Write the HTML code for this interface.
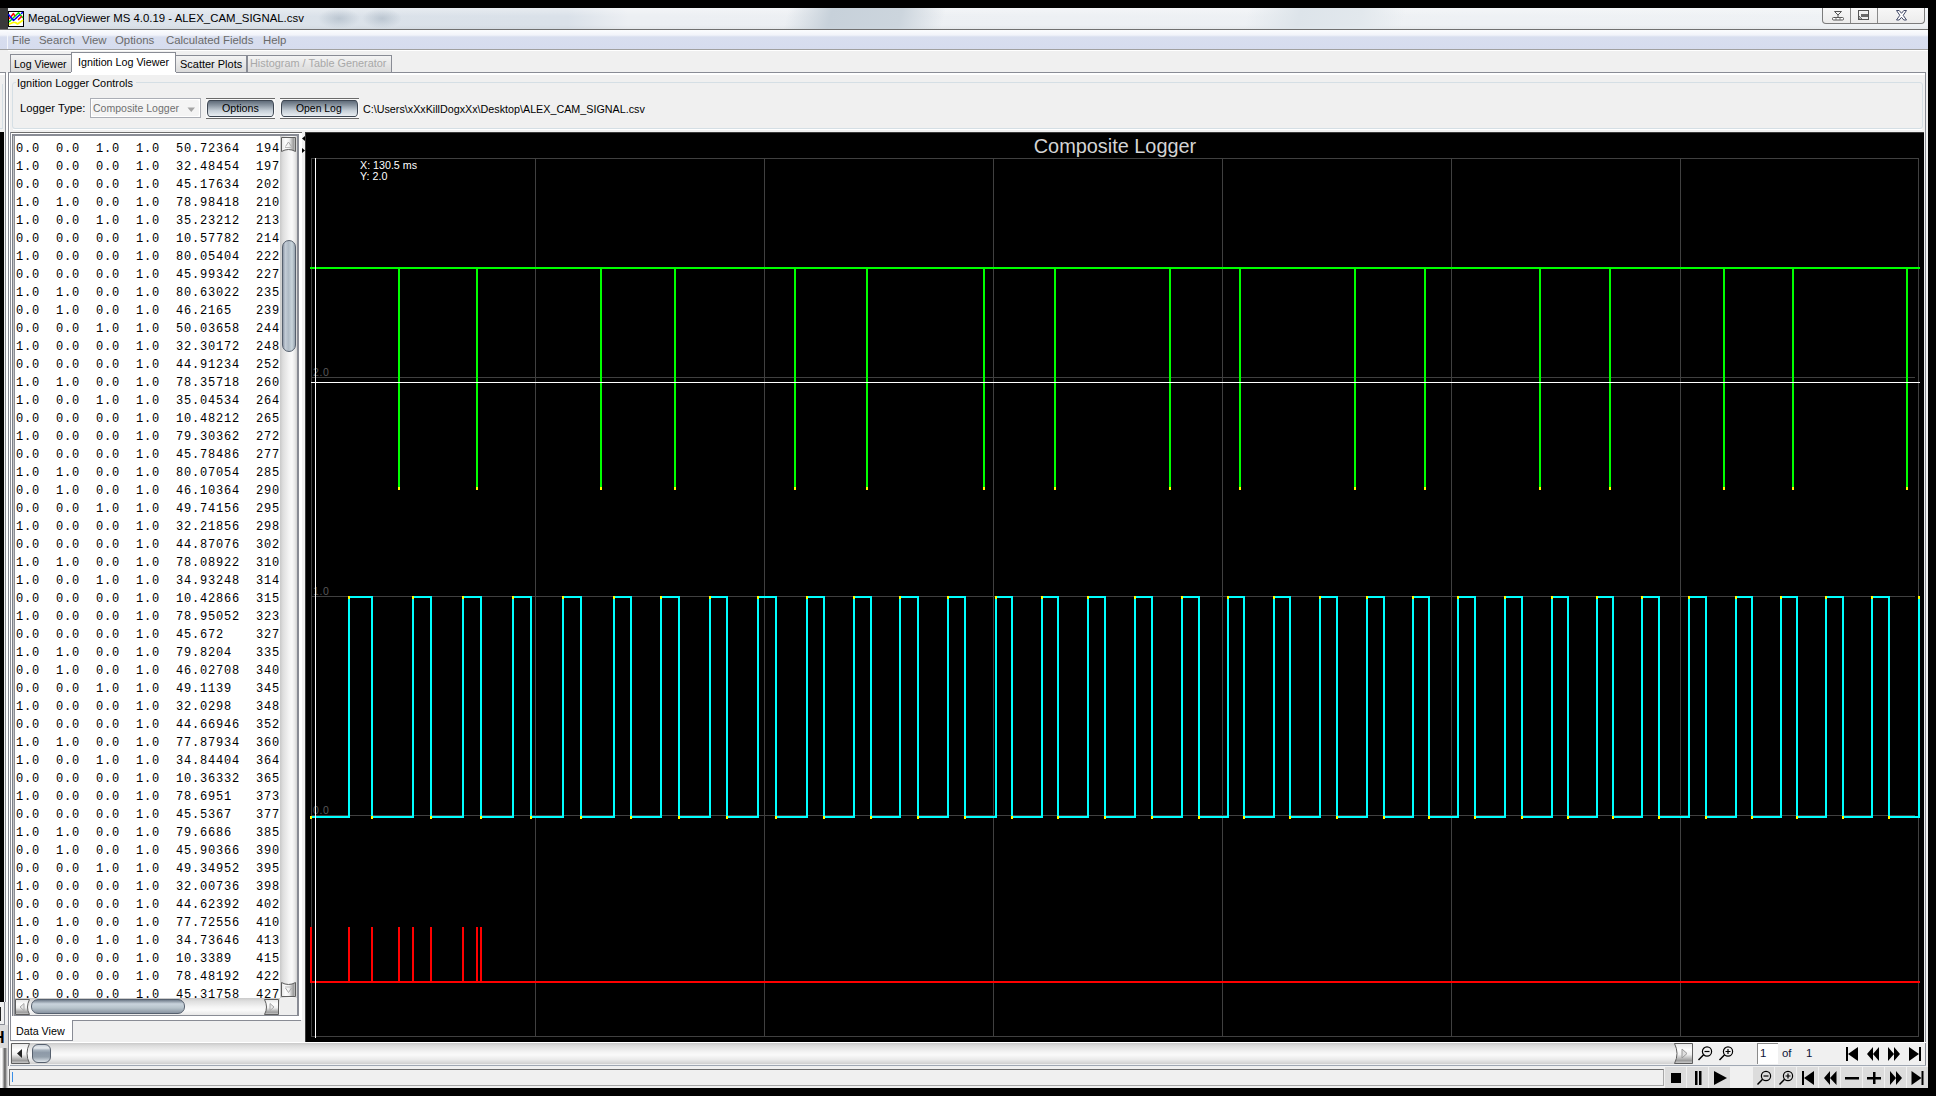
<!DOCTYPE html>
<html><head><meta charset="utf-8">
<style>
*{margin:0;padding:0;box-sizing:border-box}
html,body{width:1936px;height:1096px;overflow:hidden;background:#000}
body{position:relative;font-family:"Liberation Sans",sans-serif;font-size:11.4px;color:#000}
.a{position:absolute}
.t{position:absolute;white-space:pre;line-height:1}
svg text{font-family:"Liberation Sans",sans-serif}
.hsb{background:linear-gradient(#c9c9c9 0,#dedede 3px,#f4f4f4 9px,#fafafa 12px,#e8e8e8 17px,#d0d0d0 100%)}
.vsb{background:linear-gradient(90deg,#c9c9c9 0,#dedede 3px,#f4f4f4 9px,#fafafa 12px,#e8e8e8 15px,#d0d0d0 100%)}
.tbtn{position:absolute;top:1067px;height:21px;width:21px;background:#dcdcdc}
</style></head><body>

<!-- ===== left strip (window behind) ===== -->
<div class="a" style="left:0;top:8px;width:8px;height:22px;background:#3a3a3a"></div>
<div class="a" style="left:0;top:30px;width:8px;height:19px;background:linear-gradient(#fbfcfe 0,#f2f4fa 5px,#d8deef 7px,#d6dcee 100%)"></div><div class="a" style="left:7px;top:32px;width:1px;height:17px;background:#f4f6fb"></div>
<div class="a" style="left:0;top:49px;width:8px;height:1px;background:#a0a0a0"></div>
<div class="a" style="left:0;top:50px;width:8px;height:1038px;background:#f0f0f0"></div>
<div class="a" style="left:0;top:72px;width:6px;height:1px;background:#8b8e96"></div>
<div class="a" style="left:0;top:73px;width:5px;height:2px;background:#fff"></div>
<div class="a" style="left:5px;top:72px;width:1px;height:1016px;background:#8b8e96"></div>
<div class="a" style="left:6px;top:73px;width:2px;height:1015px;background:#fff"></div>
<div class="a" style="left:2px;top:84px;width:1px;height:44px;background:#d5dfe5"></div>
<div class="a" style="left:0;top:128px;width:3px;height:1px;background:#d5dfe5"></div>
<div class="a" style="left:0;top:132px;width:4px;height:870px;background:#000"></div>
<div class="a" style="left:5px;top:1002px;width:3px;height:86px;background:#f0f0f0"></div>
<div class="a" style="left:0;top:1007px;width:1px;height:14px;background:#222"></div>
<div class="a" style="left:4px;top:1002px;width:1px;height:23px;background:#8b8e96"></div>
<div class="a" style="left:0;top:1024px;width:5px;height:1px;background:#8b8e96"></div>
<div class="a" style="left:0;top:1025px;width:8px;height:23px;background:#dcdcdc"></div>
<div class="a" style="left:0;top:1031px;width:5px;height:15px;overflow:hidden"><div class="t" style="left:-7px;top:-1px;font-size:16px;font-weight:bold;color:#000">H</div></div>
<div class="a" style="left:0;top:1048px;width:8px;height:40px;background:linear-gradient(90deg,#f4f4f4 0,#fff 2px,#bdbdbd 3px,#555 5px,#9a9a9a 6px,#e8e8e8 8px)"></div>

<!-- ===== title bar ===== -->
<div class="a" style="left:8px;top:8px;width:1920px;height:21px;background:linear-gradient(90deg,#dce3ea 0,#dae1e9 560px,#eceff3 620px,#eff2f5 100%)"></div>
<div class="a" style="left:8px;top:8px;width:1920px;height:21px;background:linear-gradient(rgba(255,255,255,.35),rgba(255,255,255,0) 40%,rgba(255,255,255,0) 80%,rgba(0,0,0,.03))"></div>
<div class="a" style="left:318px;top:8px;width:42px;height:21px;background:radial-gradient(ellipse at center,rgba(150,165,180,.45),rgba(150,165,180,0) 70%)"></div>
<div class="a" style="left:362px;top:8px;width:40px;height:21px;background:radial-gradient(ellipse at center,rgba(150,165,180,.45),rgba(150,165,180,0) 70%)"></div>
<div class="a" style="left:780px;top:8px;width:170px;height:21px;background:linear-gradient(105deg,rgba(190,202,213,0) 5%,#c7d1da 30%,#ccd5dd 70%,rgba(190,202,213,0) 95%)"></div>
<div class="a" style="left:1240px;top:8px;width:170px;height:21px;background:linear-gradient(105deg,rgba(215,223,230,0) 5%,#dde4ea 35%,#e2e8ed 70%,rgba(215,223,230,0) 95%)"></div>
<div class="a" style="left:0;top:29px;width:1928px;height:1px;background:#707070"></div>
<!-- app icon -->
<svg class="a" style="left:8px;top:11px" width="16" height="16">
<rect x="0.5" y="0.5" width="15" height="15" fill="#fff" stroke="#000" stroke-width="1"/>
<g fill="none" stroke-width="1.5" stroke-linecap="round" stroke-linejoin="round">
<polyline points="1.5,10.5 10.5,1.8 14.5,6.5" stroke="#00e000"/>
<polyline points="1.5,7.5 5.5,2.5 6.5,4.5" stroke="#ff0000"/>
<polyline points="8.5,6.5 8.6,6.6" stroke="#ff0000"/>
<polyline points="10.5,8.5 13.5,5.5" stroke="#ff0000" stroke-dasharray="1.2 .6"/>
<polyline points="0.5,3.5 5.5,9.5 11.5,4" stroke="#0000ff"/>
<polyline points="13.5,2.5 14.5,1.5" stroke="#0000ff"/>
<polyline points="1.5,13 5,11.5 7.5,11.5 9.5,13 14.5,9.5" stroke="#ffff00" stroke-width="1.7"/>
</g>
</svg>
<div class="t" style="left:28px;top:13px;font-size:11.4px;color:#000">MegaLogViewer MS 4.0.19 - ALEX_CAM_SIGNAL.csv</div>
<!-- caption buttons -->
<div class="a" style="left:1822px;top:8px;width:103px;height:16px;border:1px solid #7c7c7c;border-top:none;border-radius:0 0 4px 4px;background:linear-gradient(#f7f7f7,#ececec)"></div>
<div class="a" style="left:1850px;top:8px;width:1px;height:15px;background:#8a8a8a"></div>
<div class="a" style="left:1877px;top:8px;width:1px;height:15px;background:#8a8a8a"></div>
<svg class="a" style="left:1830px;top:9px" width="16" height="13">
<path d="M4.5 2.5 H11.5 L8 6 Z M8 6 V8" fill="none" stroke="#555" stroke-width="1"/>
<rect x="2.5" y="8.5" width="11" height="2.5" rx="1" fill="#fff" stroke="#555" stroke-width="1"/>
<path d="M6 8.5 V11 M10 8.5 V11" stroke="#777" stroke-width="1"/>
</svg>
<svg class="a" style="left:1857px;top:10px" width="13" height="11" shape-rendering="crispEdges">
<rect x="1.5" y="0.5" width="10" height="9" fill="none" stroke="#555" stroke-width="1"/>
<rect x="4" y="4" width="7" height="3" fill="#6a6a6a"/>
<path d="M2 6 L5 9 H2 Z" fill="#fff" stroke="#555" stroke-width=".8" shape-rendering="auto"/>
</svg>
<svg class="a" style="left:1894px;top:9px" width="15" height="13">
<path d="M2.5 1.5 L5.2 1.5 L7.5 4.3 L9.8 1.5 L12.5 1.5 L9.2 6.3 L12.5 11 L9.8 11 L7.5 8.3 L5.2 11 L2.5 11 L5.8 6.3 Z" fill="#fff" stroke="#434a68" stroke-width="1"/>
</svg>

<!-- ===== menu bar ===== -->
<div class="a" style="left:8px;top:30px;width:1920px;height:19px;background:linear-gradient(#fbfcfe 0,#f2f4fa 5px,#d8deef 7px,#d6dcee 100%)"></div>
<div class="a" style="left:8px;top:49px;width:1920px;height:1px;background:#a0a0a0"></div>
<div class="t" style="left:12px;top:35px;color:#6a6a6a">File</div>
<div class="t" style="left:39px;top:35px;color:#6a6a6a">Search</div>
<div class="t" style="left:82px;top:35px;color:#6a6a6a">View</div>
<div class="t" style="left:115px;top:35px;color:#6a6a6a">Options</div>
<div class="t" style="left:166px;top:35px;color:#6a6a6a">Calculated Fields</div>
<div class="t" style="left:263px;top:35px;color:#6a6a6a">Help</div>

<!-- ===== main bg ===== -->
<div class="a" style="left:8px;top:50px;width:1920px;height:1038px;background:#f0f0f0"></div>
<div class="a" style="left:8px;top:50px;width:1920px;height:1px;background:#fff"></div>

<!-- tabs -->
<div class="a" style="left:10px;top:54px;width:62px;height:19px;border:1px solid #898c95;border-bottom:none;background:linear-gradient(#f4f4f4,#e6e6e6 50%,#d9d9d9)"></div>
<div class="t" style="left:14px;top:59px;transform:scaleX(.927);transform-origin:0 0">Log Viewer</div>
<div class="a" style="left:175px;top:55px;width:72px;height:18px;border:1px solid #898c95;border-bottom:none;background:linear-gradient(#f4f4f4,#e6e6e6 50%,#d9d9d9)"></div>
<div class="t" style="left:179.6px;top:59px;transform:scaleX(.963);transform-origin:0 0">Scatter Plots</div>
<div class="a" style="left:247px;top:55px;width:145px;height:18px;border:1px solid #898c95;border-bottom:none;background:linear-gradient(#f4f4f4,#e6e6e6 50%,#d9d9d9)"></div>
<div class="t" style="left:250.3px;top:58px;color:#a8a8a8;transform:scaleX(.955);transform-origin:0 0">Histogram / Table Generator</div>

<!-- panel border -->
<div class="a" style="left:8px;top:72px;width:1918px;height:1016px;border:1px solid #898c95;border-bottom:none;background:#f0f0f0"></div>
<div class="a" style="left:9px;top:73px;width:1916px;height:2px;background:#fff"></div>
<div class="a" style="left:9px;top:73px;width:1px;height:1015px;background:#fff"></div>
<!-- selected tab -->
<div class="a" style="left:71px;top:52px;width:105px;height:21px;border:1px solid #898c95;border-bottom:none;background:#fff"></div><div class="a" style="left:71px;top:72px;width:105px;height:3px;background:#fff"></div>
<div class="t" style="left:77.5px;top:57px;transform:scaleX(.941);transform-origin:0 0">Ignition Log Viewer</div>

<!-- group box -->
<div class="a" style="left:12px;top:82px;width:1911px;height:47px;border:1px solid #d5dfe5;border-radius:3px"></div>
<div class="a" style="left:16px;top:76px;width:120px;height:12px;background:#f0f0f0"></div>
<div class="t" style="left:17px;top:78px;transform:scaleX(.958);transform-origin:0 0">Ignition Logger Controls</div>
<div class="a" style="left:13px;top:129px;width:1909px;height:1px;background:#fff"></div>

<div class="t" style="left:19.6px;top:103px;transform:scaleX(.987);transform-origin:0 0">Logger Type:</div>
<div class="a" style="left:90px;top:98px;width:111px;height:20px;border:1px solid #abaeb5;background:#fff"></div><div class="a" style="left:92px;top:100px;width:107px;height:16px;border-radius:2px;background:#f4f4f4"></div>
<div class="t" style="left:92.8px;top:103px;color:#707070;transform:scaleX(.924);transform-origin:0 0">Composite Logger</div>
<svg class="a" style="left:187px;top:107px" width="9" height="6"><path d="M0.5 0.5 H8 L4.25 5 Z" fill="#a4a4a4"/></svg>

<!-- Options button -->
<div class="a" style="left:206px;top:98px;width:69px;height:21px;border-top:1px solid #6a6a6a;border-bottom:1px solid #6a6a6a;background:#fafafa"></div>
<div class="a" style="left:207px;top:100px;width:67px;height:17px;border:1px solid #3d4652;border-radius:3px/5px;background:linear-gradient(#5f6b79 0,#8c97a3 30%,#c7d0d8 65%,#e9eef2 100%)"></div>
<div class="t" style="left:221.5px;top:103px;transform:scaleX(.936);transform-origin:0 0">Options</div>
<!-- Open Log button -->
<div class="a" style="left:280px;top:98px;width:79px;height:21px;border-top:1px solid #6a6a6a;border-bottom:1px solid #6a6a6a;background:#fafafa"></div>
<div class="a" style="left:281px;top:100px;width:77px;height:17px;border:1px solid #3d4652;border-radius:3px/5px;background:linear-gradient(#5f6b79 0,#8c97a3 30%,#c7d0d8 65%,#e9eef2 100%)"></div>
<div class="t" style="left:295.6px;top:103px;transform:scaleX(.913);transform-origin:0 0">Open Log</div>
<div class="t" style="left:362.8px;top:104px;transform:scaleX(.943);transform-origin:0 0">C:\Users\xXxKillDogxXx\Desktop\ALEX_CAM_SIGNAL.csv</div>

<!-- ===== left table panel ===== -->
<div class="a" style="left:10px;top:132px;width:292px;height:1px;background:#6e6e6e"></div>
<div class="a" style="left:10px;top:133px;width:292px;height:887px;background:#fff"></div>
<div class="a" style="left:10px;top:132px;width:1px;height:909px;background:#898c95"></div>
<div class="a" style="left:12px;top:134px;width:287px;height:882px;border:2px solid #898c95;border-left:none"></div><div class="a" style="left:12px;top:134px;width:1px;height:882px;background:#7c7f88"></div><div class="a" style="left:13px;top:136px;width:1px;height:880px;background:#c4c4c4"></div><div class="a" style="left:14px;top:136px;width:1px;height:880px;background:#8a8d94"></div>
<div class="a" style="left:15px;top:136px;width:266px;height:862px;background:#fff;overflow:hidden">
<pre class="a" style="left:1px;top:4px;font-family:'Liberation Mono',monospace;font-size:12px;letter-spacing:.8px;line-height:18px;color:#000">0.0  0.0  1.0  1.0  50.72364  194
1.0  0.0  0.0  1.0  32.48454  197
0.0  0.0  0.0  1.0  45.17634  202
1.0  1.0  0.0  1.0  78.98418  210
1.0  0.0  1.0  1.0  35.23212  213
0.0  0.0  0.0  1.0  10.57782  214
1.0  0.0  0.0  1.0  80.05404  222
0.0  0.0  0.0  1.0  45.99342  227
1.0  1.0  0.0  1.0  80.63022  235
0.0  1.0  0.0  1.0  46.2165   239
0.0  0.0  1.0  1.0  50.03658  244
1.0  0.0  0.0  1.0  32.30172  248
0.0  0.0  0.0  1.0  44.91234  252
1.0  1.0  0.0  1.0  78.35718  260
1.0  0.0  1.0  1.0  35.04534  264
0.0  0.0  0.0  1.0  10.48212  265
1.0  0.0  0.0  1.0  79.30362  272
0.0  0.0  0.0  1.0  45.78486  277
1.0  1.0  0.0  1.0  80.07054  285
0.0  1.0  0.0  1.0  46.10364  290
0.0  0.0  1.0  1.0  49.74156  295
1.0  0.0  0.0  1.0  32.21856  298
0.0  0.0  0.0  1.0  44.87076  302
1.0  1.0  0.0  1.0  78.08922  310
1.0  0.0  1.0  1.0  34.93248  314
0.0  0.0  0.0  1.0  10.42866  315
1.0  0.0  0.0  1.0  78.95052  323
0.0  0.0  0.0  1.0  45.672    327
1.0  1.0  0.0  1.0  79.8204   335
0.0  1.0  0.0  1.0  46.02708  340
0.0  0.0  1.0  1.0  49.1139   345
1.0  0.0  0.0  1.0  32.0298   348
0.0  0.0  0.0  1.0  44.66946  352
1.0  1.0  0.0  1.0  77.87934  360
1.0  0.0  1.0  1.0  34.84404  364
0.0  0.0  0.0  1.0  10.36332  365
1.0  0.0  0.0  1.0  78.6951   373
0.0  0.0  0.0  1.0  45.5367   377
1.0  1.0  0.0  1.0  79.6686   385
0.0  1.0  0.0  1.0  45.90366  390
0.0  0.0  1.0  1.0  49.34952  395
1.0  0.0  0.0  1.0  32.00736  398
0.0  0.0  0.0  1.0  44.62392  402
1.0  1.0  0.0  1.0  77.72556  410
1.0  0.0  1.0  1.0  34.73646  413
0.0  0.0  0.0  1.0  10.3389   415
1.0  0.0  0.0  1.0  78.48192  422
0.0  0.0  0.0  1.0  45.31758  427</pre>
</div>
<!-- vertical scrollbar -->
<div class="a vsb" style="left:280px;top:136px;width:17px;height:862px"></div>
<svg class="a" style="left:281px;top:137px" width="15" height="15"><defs><linearGradient id="gU281137" x1="0" y1="0" x2="1" y2="0"><stop offset="0" stop-color="#e6e6e6"/><stop offset=".3" stop-color="#fdfdfd"/><stop offset=".55" stop-color="#f0f0f0"/><stop offset=".85" stop-color="#9c9c9c"/><stop offset="1" stop-color="#cfcfcf"/></linearGradient></defs><path d="M0.5,0.5 H14.5 V14.5 Q7.5,10.5 0.5,14.5 Z" fill="url(#gU281137)" stroke="#5e5e5e" stroke-width="1"/><path d="M4.5 9.5 L7.5 5 L10.5 9.5" fill="none" stroke="#aaa" stroke-width="1"/><path d="M4 10.5 H11" stroke="#bbb"/></svg>

<div class="a" style="left:282px;top:240px;width:14px;height:112px;border:1px solid #56606e;border-radius:7px;background:linear-gradient(90deg,#8d97a6 0,#c3ccd6 20%,#aeb9c4 45%,#c9d5dc 75%,#97a3ae)"></div>
<svg class="a" style="left:281px;top:982px" width="15" height="15"><defs><linearGradient id="gD281982" x1="0" y1="0" x2="1" y2="0"><stop offset="0" stop-color="#e6e6e6"/><stop offset=".3" stop-color="#fdfdfd"/><stop offset=".55" stop-color="#f0f0f0"/><stop offset=".85" stop-color="#9c9c9c"/><stop offset="1" stop-color="#cfcfcf"/></linearGradient></defs><path d="M0.5,0.5 Q7.5,4.5 14.5,0.5 V14.5 H0.5 Z" fill="url(#gD281982)" stroke="#5e5e5e" stroke-width="1"/><path d="M4.5 6 L7.5 10.5 L10.5 6" fill="none" stroke="#aaa" stroke-width="1"/><path d="M4 5 H11" stroke="#bbb"/></svg>
<!-- horizontal scrollbar -->
<div class="a hsb" style="left:15px;top:998px;width:265px;height:17px"></div>
<svg class="a" style="left:15px;top:999px" width="15" height="16"><defs><linearGradient id="gL15999" x1="0" y1="0" x2="0" y2="1"><stop offset="0" stop-color="#e6e6e6"/><stop offset=".3" stop-color="#fdfdfd"/><stop offset=".55" stop-color="#f0f0f0"/><stop offset=".85" stop-color="#9c9c9c"/><stop offset="1" stop-color="#cfcfcf"/></linearGradient></defs><path d="M0.5,0.5 H14.5 Q10.5,8.0 14.5,15.5 H0.5 Z" fill="url(#gL15999)" stroke="#5e5e5e" stroke-width="1"/><path d="M9 4.5 L5 8 L9 11.5 Z" fill="#e8e8e8" stroke="#a8a8a8" stroke-width="1"/></svg>

<div class="a" style="left:31px;top:999px;width:154px;height:15px;border:1px solid #56606e;border-radius:7px;background:linear-gradient(#6f7b8a,#c9d3dc 30%,#b8c4cc 60%,#8893a0)"></div>
<svg class="a" style="left:264px;top:999px" width="15" height="16"><defs><linearGradient id="gR264999" x1="0" y1="0" x2="0" y2="1"><stop offset="0" stop-color="#e6e6e6"/><stop offset=".3" stop-color="#fdfdfd"/><stop offset=".55" stop-color="#f0f0f0"/><stop offset=".85" stop-color="#9c9c9c"/><stop offset="1" stop-color="#cfcfcf"/></linearGradient></defs><path d="M0.5,0.5 H14.5 V15.5 H0.5 Q4.5,8.0 0.5,0.5 Z" fill="url(#gR264999)" stroke="#5e5e5e" stroke-width="1"/><path d="M6 4.5 L10 8 L6 11.5 Z" fill="#e8e8e8" stroke="#a8a8a8" stroke-width="1"/></svg>

<div class="a" style="left:280px;top:998px;width:17px;height:17px;background:#eeeeee"></div>
<!-- Data View tab area -->
<div class="a" style="left:11px;top:1020px;width:290px;height:21px;background:#f0f0f0"></div>
<div class="a" style="left:72px;top:1020px;width:229px;height:1px;background:#898c95"></div>
<div class="a" style="left:11px;top:1016px;width:290px;height:4px;background:#fff"></div><div class="a" style="left:11px;top:1016px;width:62px;height:25px;background:#fff;border-bottom:1px solid #898c95"></div><div class="a" style="left:72px;top:1020px;width:1px;height:21px;background:#898c95"></div>
<div class="t" style="left:16px;top:1026px;transform:scaleX(.941);transform-origin:0 0">Data View</div>

<!-- splitter -->
<div class="a" style="left:302px;top:132px;width:3px;height:910px;background:#f0f0f0"></div><div class="a" style="left:299px;top:133px;width:3px;height:887px;background:#fff"></div>
<svg class="a" style="left:301px;top:135px" width="5" height="20"><path d="M4 1 L1 3.5 L4 6 Z" fill="#000"/><path d="M1 13 L4 15.5 L1 18 Z" fill="#000"/></svg>

<div class="a" style="left:305px;top:132px;width:1619px;height:910px;background:#000;border-left:1px solid #3a3a3a;border-top:1px solid #3a3a3a"></div>

<svg width="1936" height="1096" style="position:absolute;left:0;top:0" shape-rendering="crispEdges"><rect x="311" y="158" width="1608" height="1" fill="#404040"/><rect x="311" y="1036" width="1608" height="1" fill="#404040"/><rect x="311" y="158" width="1" height="879" fill="#404040"/><rect x="1918" y="158" width="1" height="879" fill="#404040"/><rect x="535" y="158" width="1" height="879" fill="#404040"/><rect x="764" y="158" width="1" height="879" fill="#404040"/><rect x="993" y="158" width="1" height="879" fill="#404040"/><rect x="1222" y="158" width="1" height="879" fill="#404040"/><rect x="1451" y="158" width="1" height="879" fill="#404040"/><rect x="1680" y="158" width="1" height="879" fill="#404040"/><rect x="311" y="377" width="1604" height="1" fill="#404040"/><rect x="311" y="596" width="1604" height="1" fill="#404040"/><rect x="311" y="815" width="1604" height="1" fill="#404040"/><text x="313" y="376" fill="#585858" font-size="10.5" letter-spacing="0.6">2.0</text><text x="313" y="595" fill="#585858" font-size="10.5" letter-spacing="0.6">1.0</text><text x="313" y="814" fill="#585858" font-size="10.5" letter-spacing="0.6">0.0</text><rect x="310" y="267" width="1610" height="2" fill="#00ff00"/><rect x="398" y="267" width="2" height="223" fill="#00ff00"/><rect x="398" y="487" width="2" height="3" fill="#ffff00"/><rect x="476" y="267" width="2" height="223" fill="#00ff00"/><rect x="476" y="487" width="2" height="3" fill="#ffff00"/><rect x="600" y="267" width="2" height="223" fill="#00ff00"/><rect x="600" y="487" width="2" height="3" fill="#ffff00"/><rect x="674" y="267" width="2" height="223" fill="#00ff00"/><rect x="674" y="487" width="2" height="3" fill="#ffff00"/><rect x="794" y="267" width="2" height="223" fill="#00ff00"/><rect x="794" y="487" width="2" height="3" fill="#ffff00"/><rect x="866" y="267" width="2" height="223" fill="#00ff00"/><rect x="866" y="487" width="2" height="3" fill="#ffff00"/><rect x="983" y="267" width="2" height="223" fill="#00ff00"/><rect x="983" y="487" width="2" height="3" fill="#ffff00"/><rect x="1054" y="267" width="2" height="223" fill="#00ff00"/><rect x="1054" y="487" width="2" height="3" fill="#ffff00"/><rect x="1169" y="267" width="2" height="223" fill="#00ff00"/><rect x="1169" y="487" width="2" height="3" fill="#ffff00"/><rect x="1239" y="267" width="2" height="223" fill="#00ff00"/><rect x="1239" y="487" width="2" height="3" fill="#ffff00"/><rect x="1354" y="267" width="2" height="223" fill="#00ff00"/><rect x="1354" y="487" width="2" height="3" fill="#ffff00"/><rect x="1424" y="267" width="2" height="223" fill="#00ff00"/><rect x="1424" y="487" width="2" height="3" fill="#ffff00"/><rect x="1539" y="267" width="2" height="223" fill="#00ff00"/><rect x="1539" y="487" width="2" height="3" fill="#ffff00"/><rect x="1609" y="267" width="2" height="223" fill="#00ff00"/><rect x="1609" y="487" width="2" height="3" fill="#ffff00"/><rect x="1723" y="267" width="2" height="223" fill="#00ff00"/><rect x="1723" y="487" width="2" height="3" fill="#ffff00"/><rect x="1792" y="267" width="2" height="223" fill="#00ff00"/><rect x="1792" y="487" width="2" height="3" fill="#ffff00"/><rect x="1906" y="267" width="2" height="223" fill="#00ff00"/><rect x="1906" y="487" width="2" height="3" fill="#ffff00"/><rect x="310" y="816" width="40" height="2" fill="#00ffff"/><rect x="348" y="596" width="2" height="222" fill="#00ffff"/><rect x="348" y="596" width="25" height="2" fill="#00ffff"/><rect x="371" y="596" width="2" height="222" fill="#00ffff"/><rect x="371" y="816" width="43" height="2" fill="#00ffff"/><rect x="412" y="596" width="2" height="222" fill="#00ffff"/><rect x="412" y="596" width="20" height="2" fill="#00ffff"/><rect x="430" y="596" width="2" height="222" fill="#00ffff"/><rect x="430" y="816" width="34" height="2" fill="#00ffff"/><rect x="462" y="596" width="2" height="222" fill="#00ffff"/><rect x="462" y="596" width="20" height="2" fill="#00ffff"/><rect x="480" y="596" width="2" height="222" fill="#00ffff"/><rect x="480" y="816" width="34" height="2" fill="#00ffff"/><rect x="512" y="596" width="2" height="222" fill="#00ffff"/><rect x="512" y="596" width="20" height="2" fill="#00ffff"/><rect x="530" y="596" width="2" height="222" fill="#00ffff"/><rect x="530" y="816" width="34" height="2" fill="#00ffff"/><rect x="562" y="596" width="2" height="222" fill="#00ffff"/><rect x="562" y="596" width="20" height="2" fill="#00ffff"/><rect x="580" y="596" width="2" height="222" fill="#00ffff"/><rect x="580" y="816" width="35" height="2" fill="#00ffff"/><rect x="613" y="596" width="2" height="222" fill="#00ffff"/><rect x="613" y="596" width="19" height="2" fill="#00ffff"/><rect x="630" y="596" width="2" height="222" fill="#00ffff"/><rect x="630" y="816" width="32" height="2" fill="#00ffff"/><rect x="660" y="596" width="2" height="222" fill="#00ffff"/><rect x="660" y="596" width="20" height="2" fill="#00ffff"/><rect x="678" y="596" width="2" height="222" fill="#00ffff"/><rect x="678" y="816" width="33" height="2" fill="#00ffff"/><rect x="709" y="596" width="2" height="222" fill="#00ffff"/><rect x="709" y="596" width="19" height="2" fill="#00ffff"/><rect x="726" y="596" width="2" height="222" fill="#00ffff"/><rect x="726" y="816" width="33" height="2" fill="#00ffff"/><rect x="757" y="596" width="2" height="222" fill="#00ffff"/><rect x="757" y="596" width="20" height="2" fill="#00ffff"/><rect x="775" y="596" width="2" height="222" fill="#00ffff"/><rect x="775" y="816" width="33" height="2" fill="#00ffff"/><rect x="806" y="596" width="2" height="222" fill="#00ffff"/><rect x="806" y="596" width="19" height="2" fill="#00ffff"/><rect x="823" y="596" width="2" height="222" fill="#00ffff"/><rect x="823" y="816" width="32" height="2" fill="#00ffff"/><rect x="853" y="596" width="2" height="222" fill="#00ffff"/><rect x="853" y="596" width="19" height="2" fill="#00ffff"/><rect x="870" y="596" width="2" height="222" fill="#00ffff"/><rect x="870" y="816" width="31" height="2" fill="#00ffff"/><rect x="899" y="596" width="2" height="222" fill="#00ffff"/><rect x="899" y="596" width="20" height="2" fill="#00ffff"/><rect x="917" y="596" width="2" height="222" fill="#00ffff"/><rect x="917" y="816" width="32" height="2" fill="#00ffff"/><rect x="947" y="596" width="2" height="222" fill="#00ffff"/><rect x="947" y="596" width="19" height="2" fill="#00ffff"/><rect x="964" y="596" width="2" height="222" fill="#00ffff"/><rect x="964" y="816" width="33" height="2" fill="#00ffff"/><rect x="995" y="596" width="2" height="222" fill="#00ffff"/><rect x="995" y="596" width="18" height="2" fill="#00ffff"/><rect x="1011" y="596" width="2" height="222" fill="#00ffff"/><rect x="1011" y="816" width="32" height="2" fill="#00ffff"/><rect x="1041" y="596" width="2" height="222" fill="#00ffff"/><rect x="1041" y="596" width="18" height="2" fill="#00ffff"/><rect x="1057" y="596" width="2" height="222" fill="#00ffff"/><rect x="1057" y="816" width="32" height="2" fill="#00ffff"/><rect x="1087" y="596" width="2" height="222" fill="#00ffff"/><rect x="1087" y="596" width="19" height="2" fill="#00ffff"/><rect x="1104" y="596" width="2" height="222" fill="#00ffff"/><rect x="1104" y="816" width="32" height="2" fill="#00ffff"/><rect x="1134" y="596" width="2" height="222" fill="#00ffff"/><rect x="1134" y="596" width="19" height="2" fill="#00ffff"/><rect x="1151" y="596" width="2" height="222" fill="#00ffff"/><rect x="1151" y="816" width="32" height="2" fill="#00ffff"/><rect x="1181" y="596" width="2" height="222" fill="#00ffff"/><rect x="1181" y="596" width="19" height="2" fill="#00ffff"/><rect x="1198" y="596" width="2" height="222" fill="#00ffff"/><rect x="1198" y="816" width="31" height="2" fill="#00ffff"/><rect x="1227" y="596" width="2" height="222" fill="#00ffff"/><rect x="1227" y="596" width="18" height="2" fill="#00ffff"/><rect x="1243" y="596" width="2" height="222" fill="#00ffff"/><rect x="1243" y="816" width="32" height="2" fill="#00ffff"/><rect x="1273" y="596" width="2" height="222" fill="#00ffff"/><rect x="1273" y="596" width="18" height="2" fill="#00ffff"/><rect x="1289" y="596" width="2" height="222" fill="#00ffff"/><rect x="1289" y="816" width="32" height="2" fill="#00ffff"/><rect x="1319" y="596" width="2" height="222" fill="#00ffff"/><rect x="1319" y="596" width="19" height="2" fill="#00ffff"/><rect x="1336" y="596" width="2" height="222" fill="#00ffff"/><rect x="1336" y="816" width="32" height="2" fill="#00ffff"/><rect x="1366" y="596" width="2" height="222" fill="#00ffff"/><rect x="1366" y="596" width="19" height="2" fill="#00ffff"/><rect x="1383" y="596" width="2" height="222" fill="#00ffff"/><rect x="1383" y="816" width="31" height="2" fill="#00ffff"/><rect x="1412" y="596" width="2" height="222" fill="#00ffff"/><rect x="1412" y="596" width="18" height="2" fill="#00ffff"/><rect x="1428" y="596" width="2" height="222" fill="#00ffff"/><rect x="1428" y="816" width="31" height="2" fill="#00ffff"/><rect x="1457" y="596" width="2" height="222" fill="#00ffff"/><rect x="1457" y="596" width="19" height="2" fill="#00ffff"/><rect x="1474" y="596" width="2" height="222" fill="#00ffff"/><rect x="1474" y="816" width="32" height="2" fill="#00ffff"/><rect x="1504" y="596" width="2" height="222" fill="#00ffff"/><rect x="1504" y="596" width="19" height="2" fill="#00ffff"/><rect x="1521" y="596" width="2" height="222" fill="#00ffff"/><rect x="1521" y="816" width="32" height="2" fill="#00ffff"/><rect x="1551" y="596" width="2" height="222" fill="#00ffff"/><rect x="1551" y="596" width="18" height="2" fill="#00ffff"/><rect x="1567" y="596" width="2" height="222" fill="#00ffff"/><rect x="1567" y="816" width="31" height="2" fill="#00ffff"/><rect x="1596" y="596" width="2" height="222" fill="#00ffff"/><rect x="1596" y="596" width="18" height="2" fill="#00ffff"/><rect x="1612" y="596" width="2" height="222" fill="#00ffff"/><rect x="1612" y="816" width="31" height="2" fill="#00ffff"/><rect x="1641" y="596" width="2" height="222" fill="#00ffff"/><rect x="1641" y="596" width="19" height="2" fill="#00ffff"/><rect x="1658" y="596" width="2" height="222" fill="#00ffff"/><rect x="1658" y="816" width="32" height="2" fill="#00ffff"/><rect x="1688" y="596" width="2" height="222" fill="#00ffff"/><rect x="1688" y="596" width="19" height="2" fill="#00ffff"/><rect x="1705" y="596" width="2" height="222" fill="#00ffff"/><rect x="1705" y="816" width="32" height="2" fill="#00ffff"/><rect x="1735" y="596" width="2" height="222" fill="#00ffff"/><rect x="1735" y="596" width="18" height="2" fill="#00ffff"/><rect x="1751" y="596" width="2" height="222" fill="#00ffff"/><rect x="1751" y="816" width="31" height="2" fill="#00ffff"/><rect x="1780" y="596" width="2" height="222" fill="#00ffff"/><rect x="1780" y="596" width="18" height="2" fill="#00ffff"/><rect x="1796" y="596" width="2" height="222" fill="#00ffff"/><rect x="1796" y="816" width="31" height="2" fill="#00ffff"/><rect x="1825" y="596" width="2" height="222" fill="#00ffff"/><rect x="1825" y="596" width="19" height="2" fill="#00ffff"/><rect x="1842" y="596" width="2" height="222" fill="#00ffff"/><rect x="1842" y="816" width="31" height="2" fill="#00ffff"/><rect x="1871" y="596" width="2" height="222" fill="#00ffff"/><rect x="1871" y="596" width="19" height="2" fill="#00ffff"/><rect x="1888" y="596" width="2" height="222" fill="#00ffff"/><rect x="1888" y="816" width="32" height="2" fill="#00ffff"/><rect x="1918" y="596" width="2" height="222" fill="#00ffff"/><rect x="1918" y="596" width="2" height="2" fill="#00ffff"/><rect x="310" y="816" width="2" height="3" fill="#ffff00"/><rect x="348" y="596" width="2" height="3" fill="#ffff00"/><rect x="412" y="596" width="2" height="3" fill="#ffff00"/><rect x="462" y="596" width="2" height="3" fill="#ffff00"/><rect x="512" y="596" width="2" height="3" fill="#ffff00"/><rect x="562" y="596" width="2" height="3" fill="#ffff00"/><rect x="613" y="596" width="2" height="3" fill="#ffff00"/><rect x="660" y="596" width="2" height="3" fill="#ffff00"/><rect x="709" y="596" width="2" height="3" fill="#ffff00"/><rect x="757" y="596" width="2" height="3" fill="#ffff00"/><rect x="806" y="596" width="2" height="3" fill="#ffff00"/><rect x="853" y="596" width="2" height="3" fill="#ffff00"/><rect x="899" y="596" width="2" height="3" fill="#ffff00"/><rect x="947" y="596" width="2" height="3" fill="#ffff00"/><rect x="995" y="596" width="2" height="3" fill="#ffff00"/><rect x="1041" y="596" width="2" height="3" fill="#ffff00"/><rect x="1087" y="596" width="2" height="3" fill="#ffff00"/><rect x="1134" y="596" width="2" height="3" fill="#ffff00"/><rect x="1181" y="596" width="2" height="3" fill="#ffff00"/><rect x="1227" y="596" width="2" height="3" fill="#ffff00"/><rect x="1273" y="596" width="2" height="3" fill="#ffff00"/><rect x="1319" y="596" width="2" height="3" fill="#ffff00"/><rect x="1366" y="596" width="2" height="3" fill="#ffff00"/><rect x="1412" y="596" width="2" height="3" fill="#ffff00"/><rect x="1457" y="596" width="2" height="3" fill="#ffff00"/><rect x="1504" y="596" width="2" height="3" fill="#ffff00"/><rect x="1551" y="596" width="2" height="3" fill="#ffff00"/><rect x="1596" y="596" width="2" height="3" fill="#ffff00"/><rect x="1641" y="596" width="2" height="3" fill="#ffff00"/><rect x="1688" y="596" width="2" height="3" fill="#ffff00"/><rect x="1735" y="596" width="2" height="3" fill="#ffff00"/><rect x="1780" y="596" width="2" height="3" fill="#ffff00"/><rect x="1825" y="596" width="2" height="3" fill="#ffff00"/><rect x="1871" y="596" width="2" height="3" fill="#ffff00"/><rect x="1918" y="596" width="2" height="3" fill="#ffff00"/><rect x="371" y="816" width="2" height="3" fill="#ffff00"/><rect x="430" y="816" width="2" height="3" fill="#ffff00"/><rect x="480" y="816" width="2" height="3" fill="#ffff00"/><rect x="530" y="816" width="2" height="3" fill="#ffff00"/><rect x="580" y="816" width="2" height="3" fill="#ffff00"/><rect x="630" y="816" width="2" height="3" fill="#ffff00"/><rect x="678" y="816" width="2" height="3" fill="#ffff00"/><rect x="726" y="816" width="2" height="3" fill="#ffff00"/><rect x="775" y="816" width="2" height="3" fill="#ffff00"/><rect x="823" y="816" width="2" height="3" fill="#ffff00"/><rect x="870" y="816" width="2" height="3" fill="#ffff00"/><rect x="917" y="816" width="2" height="3" fill="#ffff00"/><rect x="964" y="816" width="2" height="3" fill="#ffff00"/><rect x="1011" y="816" width="2" height="3" fill="#ffff00"/><rect x="1057" y="816" width="2" height="3" fill="#ffff00"/><rect x="1104" y="816" width="2" height="3" fill="#ffff00"/><rect x="1151" y="816" width="2" height="3" fill="#ffff00"/><rect x="1198" y="816" width="2" height="3" fill="#ffff00"/><rect x="1243" y="816" width="2" height="3" fill="#ffff00"/><rect x="1289" y="816" width="2" height="3" fill="#ffff00"/><rect x="1336" y="816" width="2" height="3" fill="#ffff00"/><rect x="1383" y="816" width="2" height="3" fill="#ffff00"/><rect x="1428" y="816" width="2" height="3" fill="#ffff00"/><rect x="1474" y="816" width="2" height="3" fill="#ffff00"/><rect x="1521" y="816" width="2" height="3" fill="#ffff00"/><rect x="1567" y="816" width="2" height="3" fill="#ffff00"/><rect x="1612" y="816" width="2" height="3" fill="#ffff00"/><rect x="1658" y="816" width="2" height="3" fill="#ffff00"/><rect x="1705" y="816" width="2" height="3" fill="#ffff00"/><rect x="1751" y="816" width="2" height="3" fill="#ffff00"/><rect x="1796" y="816" width="2" height="3" fill="#ffff00"/><rect x="1842" y="816" width="2" height="3" fill="#ffff00"/><rect x="1888" y="816" width="2" height="3" fill="#ffff00"/><rect x="310" y="981" width="1610" height="2" fill="#ff0000"/><rect x="310" y="927" width="2" height="56" fill="#ff0000"/><rect x="348" y="927" width="2" height="56" fill="#ff0000"/><rect x="371" y="927" width="2" height="56" fill="#ff0000"/><rect x="398" y="927" width="2" height="56" fill="#ff0000"/><rect x="412" y="927" width="2" height="56" fill="#ff0000"/><rect x="430" y="927" width="2" height="56" fill="#ff0000"/><rect x="462" y="927" width="2" height="56" fill="#ff0000"/><rect x="476" y="927" width="2" height="56" fill="#ff0000"/><rect x="480" y="927" width="2" height="56" fill="#ff0000"/><rect x="315" y="158" width="1" height="880" fill="#ffffff"/><rect x="311" y="382" width="1609" height="1" fill="#ffffff"/><text x="1033.7" y="153" fill="#d4d4d4" font-size="19.5" transform="translate(1033.7 0) scale(1.021 1) translate(-1033.7 0)">Composite Logger</text><text x="360" y="169" fill="#ffffff" font-size="10.7">X: 130.5 ms</text><text x="360" y="180" fill="#ffffff" font-size="10.7">Y: 2.0</text></svg>

<!-- ===== horizontal scroll (chart) ===== -->
<div class="a" style="left:10px;top:1042px;width:1916px;height:1px;background:#fff"></div>
<div class="a hsb" style="left:11px;top:1043px;width:1682px;height:21px"></div>
<svg class="a" style="left:11px;top:1043px" width="19" height="21"><defs><linearGradient id="gL111043" x1="0" y1="0" x2="0" y2="1"><stop offset="0" stop-color="#e6e6e6"/><stop offset=".3" stop-color="#fdfdfd"/><stop offset=".55" stop-color="#f0f0f0"/><stop offset=".85" stop-color="#9c9c9c"/><stop offset="1" stop-color="#cfcfcf"/></linearGradient></defs><path d="M0.5,0.5 H18.5 Q13.5,10.5 18.5,20.5 H0.5 Z" fill="url(#gL111043)" stroke="#5e5e5e" stroke-width="1"/><path d="M11 6 L6 10.5 L11 15 Z" fill="#222"/></svg>

<div class="a" style="left:32px;top:1044px;width:19px;height:19px;border:1px solid #56606e;border-radius:6px;background:linear-gradient(#c9d0d8 0,#e8ecf0 18%,#a9b4bf 30%,#8e9aa8 45%,#94a0ac 70%,#c5ced6 90%,#dfe5ea)"></div>
<svg class="a" style="left:1674px;top:1043px" width="19" height="21"><defs><linearGradient id="gR16741043" x1="0" y1="0" x2="0" y2="1"><stop offset="0" stop-color="#e6e6e6"/><stop offset=".3" stop-color="#fdfdfd"/><stop offset=".55" stop-color="#f0f0f0"/><stop offset=".85" stop-color="#9c9c9c"/><stop offset="1" stop-color="#cfcfcf"/></linearGradient></defs><path d="M0.5,0.5 H18.5 V20.5 H0.5 Q5.5,10.5 0.5,0.5 Z" fill="url(#gR16741043)" stroke="#5e5e5e" stroke-width="1"/><path d="M8 6 L13 10.5 L8 15 Z" fill="#dedede" stroke="#9a9a9a" stroke-width="1"/></svg>


<!-- chart toolbar -->
<svg class="a" style="left:1696px;top:1045px" width="240" height="20">
<g fill="none" stroke="#000" stroke-width="1.2">
<circle cx="11" cy="6.5" r="4.6"/><path d="M8.5 6.5 H13.5"/><path d="M7.6 9.8 L2.5 15" stroke-width="1.5"/>
<circle cx="32" cy="6.5" r="4.6"/><path d="M29.5 6.5 H34.5 M32 4 V9"/><path d="M28.6 9.8 L23.5 15" stroke-width="1.5"/>
</g>
</svg>
<div class="a" style="left:1757px;top:1043px;width:21px;height:21px;background:#fff;border-left:1px solid #8a8a8a;border-top:1px solid #8a8a8a"></div>
<div class="t" style="left:1760px;top:1048px;color:#0c1438">1</div>
<div class="t" style="left:1782px;top:1048px;color:#0c1438">of</div>
<div class="t" style="left:1806px;top:1048px;color:#0c1438">1</div>
<svg class="a" style="left:1844px;top:1045px" width="84" height="18">
<g fill="#000">
<rect x="2" y="2" width="2" height="14"/><path d="M4 9 L14 2 V16 Z"/>
<path d="M23 9 L29 2 V16 Z M29 9 L35 2 V16 Z"/>
<path d="M44 2 L50 9 L44 16 Z M50 2 L56 9 L50 16 Z"/>
<path d="M65 2 L75 9 L65 16 Z"/><rect x="75" y="2" width="2" height="14"/>
</g>
</svg>
<div class="a" style="left:10px;top:1065px;width:1916px;height:1px;background:#a0a8b4"></div>

<!-- ===== bottom toolbar ===== -->
<div class="a" style="left:8px;top:1066px;width:1920px;height:22px;background:#f0f0f0"></div>
<div class="a" style="left:9px;top:1069px;width:1655px;height:17px;border:1px solid #a8a8a8;border-top-color:#6e6e6e;border-left-color:#6e6e6e;background:#f0f0f0"></div>
<div class="a" style="left:12px;top:1072px;width:1px;height:10px;background:#3a8ee6"></div>
<div class="tbtn" style="left:1665px"></div>
<div class="tbtn" style="left:1687px"></div>
<div class="tbtn" style="left:1709px"></div>
<div class="tbtn" style="left:1753px"></div>
<div class="tbtn" style="left:1775px"></div>
<div class="tbtn" style="left:1797px"></div>
<div class="tbtn" style="left:1819px"></div>
<div class="tbtn" style="left:1841px"></div>
<div class="tbtn" style="left:1863px"></div>
<div class="tbtn" style="left:1885px"></div>
<div class="tbtn" style="left:1907px"></div>
<svg class="a" style="left:1665px;top:1067px" width="263" height="21">
<g fill="#000">
<rect x="6" y="6" width="10" height="10"/>
<rect x="30" y="4" width="2.5" height="14"/><rect x="34" y="4" width="2.5" height="14"/>
<path d="M49 4 L62 11 L49 18 Z"/>
<rect x="137" y="4" width="2" height="14"/><path d="M139 11 L149 4 V18 Z"/>
<path d="M159 11 L165 4 V18 Z M165 11 L171.5 4 V18 Z"/>
<rect x="180" y="10" width="14" height="2.5"/>
<rect x="202" y="10" width="14" height="2.5"/><rect x="208" y="5" width="2.5" height="12"/>
<path d="M225 4 L231 11 L225 18 Z M231 4 L237 11 L231 18 Z"/>
<path d="M246.5 4 L256.5 11 L246.5 18 Z"/><rect x="256.5" y="4" width="2" height="14"/>
</g>
<g fill="none" stroke="#000" stroke-width="1.2">
<circle cx="101" cy="9" r="4.6"/><path d="M98.5 9 H103.5"/><path d="M97.6 12.3 L92.5 17.5" stroke-width="1.5"/>
<circle cx="123" cy="9" r="4.6"/><path d="M120.5 9 H125.5 M123 6.5 V11.5"/><path d="M119.6 12.3 L114.5 17.5" stroke-width="1.5"/>
</g>
</svg>

</body></html>
